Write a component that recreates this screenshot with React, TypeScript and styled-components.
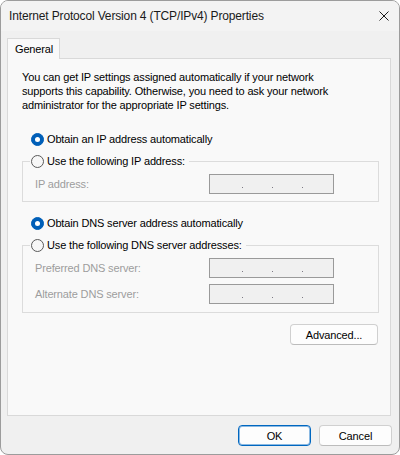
import React from 'react';
import styled, { createGlobalStyle } from 'styled-components';

const Global = createGlobalStyle`
  html, body { margin: 0; padding: 0; background: #ffffff; }
  body {
    font-family: "Liberation Sans", Arial, sans-serif;
    font-size: 11px;
    color: #000000;
  }
  * { box-sizing: border-box; }
`;

const Window = styled.div`
  width: 400px;
  height: 455px;
  display: flex;
  flex-direction: column;
  background: #f0f0f0;
  border: 1px solid #9c9c9c;
  border-radius: 8px;
  overflow: hidden;
  letter-spacing: -0.15px;
`;

const TitleBar = styled.div`
  height: 30px;
  flex: none;
  display: flex;
  align-items: center;
  justify-content: space-between;
  padding: 0 10px 0 8px;
  background: #f3f3f3;
  color: #1a1a1a;
  font-size: 12px;
`;

const CloseIcon = styled.svg`
  display: block;
  width: 10px;
  height: 10px;
`;

const Body = styled.div`
  flex: none;
  display: flex;
  flex-direction: column;
  padding: 7px 8px 0 6px;
`;

const TabStrip = styled.div`
  display: flex;
  height: 20px;
  position: relative;
  z-index: 1;
`;

const Tab = styled.div`
  width: 53px;
  height: 21px;
  padding: 0 0 0 7px;
  display: flex;
  align-items: center;
  background: #f9f9f9;
  border: 1px solid #d9d9d9;
  border-bottom: none;
`;

const Panel = styled.div`
  height: 358px;
  display: flex;
  flex-direction: column;
  padding: 11px 11px 0 14px;
  background: #f9f9f9;
  border: 1px solid #d9d9d9;
`;

const Intro = styled.p`
  margin: 0;
  line-height: 14px;
  white-space: nowrap;
`;

const RadioRow = styled.div<{ $mt: number }>`
  margin-top: ${p => p.$mt}px;
  height: 16px;
  display: flex;
  align-items: center;
  gap: 3px;
  padding-left: 9px;
`;

const Radio = styled.span<{ $checked?: boolean }>`
  flex: none;
  position: relative;
  width: 13px;
  height: 13px;
  border-radius: 50%;
  background: ${p => (p.$checked ? '#005fb8' : '#f7f7f7')};
  border: 1px solid ${p => (p.$checked ? '#005fb8' : '#5a5a5a')};
  &::after {
    content: '';
    display: ${p => (p.$checked ? 'block' : 'none')};
    position: absolute;
    left: 3px;
    top: 3px;
    width: 5px;
    height: 5px;
    border-radius: 50%;
    background: #ffffff;
  }
`;

const Group = styled.fieldset<{ $mt: number }>`
  margin: ${p => p.$mt}px 0 0 0;
  padding: 0;
  min-width: 0;
  border: 1px solid #dcdcdc;
`;

const GroupLegend = styled.legend`
  margin-left: 7px;
  padding: 0 4px 0 1px;
`;

const LegendInner = styled.span`
  height: 16px;
  display: flex;
  align-items: center;
  gap: 3px;
`;

const GroupBody = styled.div<{ $pb: number }>`
  display: flex;
  flex-direction: column;
  gap: 6px;
  padding: 5px 0 ${p => p.$pb}px 12px;
`;

const FieldRow = styled.div`
  display: grid;
  grid-template-columns: 174px 125px;
  align-items: center;
  height: 20px;
`;

const FieldLabel = styled.span`
  color: #9d9d9d;
`;

const IpBox = styled.div`
  width: 125px;
  height: 20px;
  display: flex;
  align-items: flex-start;
  gap: 29px;
  padding-left: 32px;
  background: #f0f0f0;
  border: 1px solid #9a9a9a;
`;

const Dot = styled.span`
  width: 1px;
  height: 1px;
  margin-top: 12px;
  background: #7d7a84;
`;

const Button = styled.button<{ $w: number; $primary?: boolean }>`
  width: ${p => p.$w}px;
  height: 21px;
  padding: 0;
  font-family: inherit;
  font-size: 11px;
  letter-spacing: inherit;
  color: #000000;
  background: #fdfdfd;
  border: 1px solid ${p => (p.$primary ? '#0067c0' : '#d0d0d0')};
  border-bottom-color: ${p => (p.$primary ? '#0067c0' : '#bcbcbc')};
  border-radius: 4px;
  box-shadow: ${p => (p.$primary ? 'inset 0 0 0 1px rgba(0, 103, 192, 0.45)' : 'none')};
`;

const AdvancedButton = styled(Button)`
  margin-top: 11px;
  align-self: flex-end;
  margin-right: 1px;
`;

const Footer = styled.div`
  flex: none;
  height: 38px;
  display: flex;
  justify-content: flex-end;
  align-items: flex-start;
  gap: 8px;
  padding: 9px 7px 0 0;
`;

function IpField() {
  return (
    <IpBox>
      <Dot />
      <Dot />
      <Dot />
    </IpBox>
  );
}

export default function App() {
  return (
    <>
      <Global />
      <Window>
        <TitleBar>
          <span>Internet Protocol Version 4 (TCP/IPv4) Properties</span>
          <CloseIcon viewBox="0 0 10 10">
            <path d="M0.5 0.5 L9.5 9.5 M9.5 0.5 L0.5 9.5" stroke="#1b1b1b" strokeWidth="1" fill="none" />
          </CloseIcon>
        </TitleBar>
        <Body>
          <TabStrip>
            <Tab>General</Tab>
          </TabStrip>
          <Panel>
            <Intro>
              You can get IP settings assigned automatically if your network
              <br />
              supports this capability. Otherwise, you need to ask your network
              <br />
              administrator for the appropriate IP settings.
            </Intro>
            <RadioRow $mt={19}>
              <Radio $checked />
              <span>Obtain an IP address automatically</span>
            </RadioRow>
            <Group $mt={6}>
              <GroupLegend>
                <LegendInner>
                  <Radio />
                  <span>Use the following IP address:</span>
                </LegendInner>
              </GroupLegend>
              <GroupBody $pb={7}>
                <FieldRow>
                  <FieldLabel>IP address:</FieldLabel>
                  <IpField />
                </FieldRow>
              </GroupBody>
            </Group>
            <RadioRow $mt={13}>
              <Radio $checked />
              <span>Obtain DNS server address automatically</span>
            </RadioRow>
            <Group $mt={6}>
              <GroupLegend>
                <LegendInner>
                  <Radio />
                  <span>Use the following DNS server addresses:</span>
                </LegendInner>
              </GroupLegend>
              <GroupBody $pb={8}>
                <FieldRow>
                  <FieldLabel>Preferred DNS server:</FieldLabel>
                  <IpField />
                </FieldRow>
                <FieldRow>
                  <FieldLabel>Alternate DNS server:</FieldLabel>
                  <IpField />
                </FieldRow>
              </GroupBody>
            </Group>
            <AdvancedButton $w={88}>Advanced...</AdvancedButton>
          </Panel>
        </Body>
        <Footer>
          <Button $w={73} $primary>OK</Button>
          <Button $w={73}>Cancel</Button>
        </Footer>
      </Window>
    </>
  );
}
